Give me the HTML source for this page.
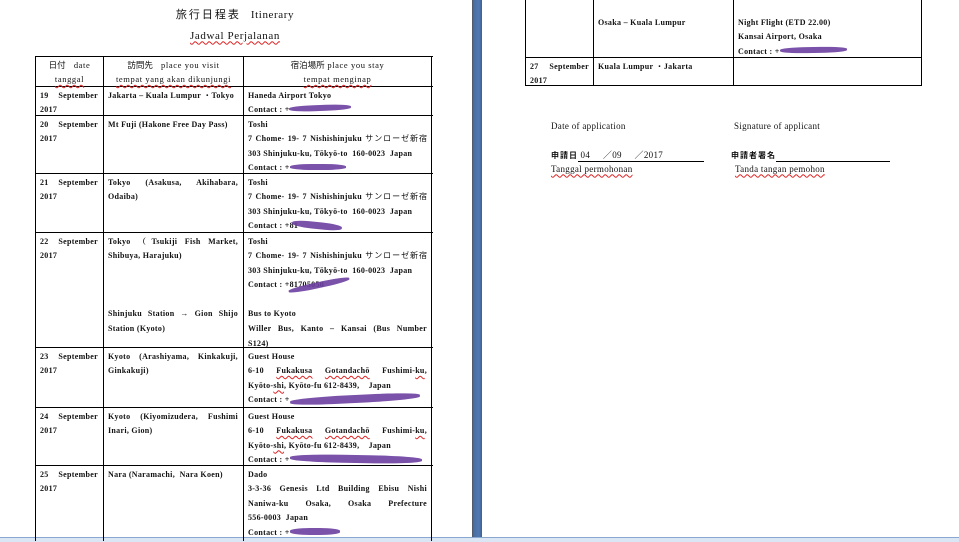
<!DOCTYPE html>
<html><head><meta charset="utf-8"><style>
body{margin:0;width:959px;height:541px;overflow:hidden;background:#fff;position:relative;font-family:"Liberation Serif","Noto Serif CJK SC",serif;color:#111}
.l{position:absolute;background:#000}
.t{position:absolute;font-size:8px;line-height:14.6px;font-weight:bold;letter-spacing:0.3px;white-space:nowrap;margin-top:1.5px}
.t>div{height:14.6px}
.J{text-align:justify;text-align-last:justify}
.c{text-align:center}
.s{position:absolute;background:#6b3fa0;border-radius:40%;opacity:.9;margin-top:1px}
.w{text-decoration:underline wavy #d22;text-decoration-thickness:1px;text-underline-offset:2px}
.j{font-family:"Noto Sans CJK JP",sans-serif;font-weight:normal;letter-spacing:0}
</style></head><body>
<div style="position:absolute;left:472px;top:0;width:10px;height:537px;background:linear-gradient(90deg,#555 0,#4a6ea5 2px,#5078b0 70%,#3d5f95)"></div>
<div style="position:absolute;left:0;top:537px;width:959px;height:4px;background:#dbe6f4;border-top:1px solid #8aa8cf"></div>

<div class="t c" style="left:160px;top:5px;width:150px;font-size:11px;font-weight:normal;letter-spacing:0.6px"><span class="j" style="letter-spacing:2px">旅行日程表</span>&nbsp;&nbsp; Itinerary</div>
<div class="t c" style="left:160px;top:27px;width:150px;font-size:11px;font-weight:normal;letter-spacing:0.6px"><span class="w">Jadwal Perjalanan</span></div>

<div class="l" style="left:35px;top:56px;width:398px;height:1px"></div>
<div class="l" style="left:35px;top:86px;width:398px;height:1px"></div>
<div class="l" style="left:35px;top:115px;width:398px;height:1px"></div>
<div class="l" style="left:35px;top:173px;width:398px;height:1px"></div>
<div class="l" style="left:35px;top:232px;width:398px;height:1px"></div>
<div class="l" style="left:35px;top:347px;width:398px;height:1px"></div>
<div class="l" style="left:35px;top:407px;width:398px;height:1px"></div>
<div class="l" style="left:35px;top:465px;width:398px;height:1px"></div>
<div class="l" style="left:35px;top:56px;width:1px;height:485px"></div>
<div class="l" style="left:103px;top:56px;width:1px;height:485px"></div>
<div class="l" style="left:243px;top:56px;width:1px;height:485px"></div>
<div class="l" style="left:431px;top:56px;width:1px;height:485px"></div>

<div class="t c" style="left:36px;top:56px;width:67px;font-weight:normal;font-size:8.5px;letter-spacing:0.6px"><div><span class="j">日付</span>&nbsp;&nbsp; date</div><div><span class="w">tanggal</span></div></div>
<div class="t c" style="left:104px;top:56px;width:139px;font-weight:normal;font-size:8.5px;letter-spacing:0.6px"><div><span class="j">訪問先</span>&nbsp;&nbsp; place you visit</div><div><span class="w">tempat yang akan dikunjungi</span></div></div>
<div class="t c" style="left:244px;top:56px;width:187px;font-weight:normal;font-size:8.5px;letter-spacing:0.6px"><div><span class="j">宿泊場所</span> place you stay</div><div><span class="w">tempat menginap</span></div></div>

<div class="t" style="left:40px;top:87px;width:58px"><div class="J">19 September</div><div>2017</div></div>
<div class="t" style="left:108px;top:87px;width:130px"><div>Jakarta – Kuala Lumpur ・Tokyo</div></div>
<div class="t" style="left:248px;top:87px;width:178px"><div>Haneda Airport Tokyo</div><div>Contact : +</div></div>
<div class="s" style="left:289px;top:104px;width:62px;height:6px;transform:rotate(-2deg)"></div>

<div class="t" style="left:40px;top:116px;width:58px"><div class="J">20 September</div><div>2017</div></div>
<div class="t" style="left:108px;top:116px;width:130px"><div>Mt Fuji (Hakone Free Day Pass)</div></div>
<div class="t" style="left:248px;top:116px;width:179px"><div>Toshi</div><div class="J">7 Chome- 19- 7 Nishishinjuku <span class="j">サンローゼ新宿</span></div><div>303 Shinjuku-ku, Tōkyō-to &nbsp;160-0023 &nbsp;Japan</div><div>Contact : +</div></div>
<div class="s" style="left:290px;top:163px;width:56px;height:6px"></div>

<div class="t" style="left:40px;top:174px;width:58px"><div class="J">21 September</div><div>2017</div></div>
<div class="t" style="left:108px;top:174px;width:130px"><div class="J">Tokyo (Asakusa, Akihabara,</div><div>Odaiba)</div></div>
<div class="t" style="left:248px;top:174px;width:179px"><div>Toshi</div><div class="J">7 Chome- 19- 7 Nishishinjuku <span class="j">サンローゼ新宿</span></div><div>303 Shinjuku-ku, Tōkyō-to &nbsp;160-0023 &nbsp;Japan</div><div>Contact : +81</div></div>
<div class="s" style="left:292px;top:221px;width:50px;height:7px;transform:rotate(6deg)"></div>

<div class="t" style="left:40px;top:233px;width:58px"><div class="J">22 September</div><div>2017</div></div>
<div class="t" style="left:108px;top:233px;width:130px"><div class="J">Tokyo （Tsukiji Fish Market,</div><div>Shibuya, Harajuku)</div><div></div><div></div><div></div><div class="J">Shinjuku Station → Gion Shijo</div><div>Station (Kyoto)</div></div>
<div class="t" style="left:248px;top:233px;width:179px"><div>Toshi</div><div class="J">7 Chome- 19- 7 Nishishinjuku <span class="j">サンローゼ新宿</span></div><div>303 Shinjuku-ku, Tōkyō-to &nbsp;160-0023 &nbsp;Japan</div><div>Contact : +81705050</div><div></div><div>Bus to Kyoto</div><div class="J">Willer Bus, Kanto – Kansai (Bus Number</div><div>S124)</div></div>
<div class="s" style="left:288px;top:281px;width:62px;height:6px;transform:rotate(-12deg)"></div>

<div class="t" style="left:40px;top:348px;width:58px"><div class="J">23 September</div><div>2017</div></div>
<div class="t" style="left:108px;top:348px;width:130px"><div class="J">Kyoto (Arashiyama, Kinkakuji,</div><div>Ginkakuji)</div></div>
<div class="t" style="left:248px;top:348px;width:179px"><div>Guest House</div><div class="J">6-10 <span class="w">Fukakusa</span> <span class="w">Gotandachō</span> Fushimi-<span class="w">ku</span>,</div><div>Kyōto-<span class="w">shi</span>, Kyōto-fu 612-8439, &nbsp;&nbsp;&nbsp;Japan</div><div>Contact : +</div></div>
<div class="s" style="left:290px;top:394px;width:130px;height:8px;transform:rotate(-3deg)"></div>

<div class="t" style="left:40px;top:408px;width:58px"><div class="J">24 September</div><div>2017</div></div>
<div class="t" style="left:108px;top:408px;width:130px"><div class="J">Kyoto (Kiyomizudera, Fushimi</div><div>Inari, Gion)</div></div>
<div class="t" style="left:248px;top:408px;width:179px"><div>Guest House</div><div class="J">6-10 <span class="w">Fukakusa</span> <span class="w">Gotandachō</span> Fushimi-<span class="w">ku</span>,</div><div>Kyōto-<span class="w">shi</span>, Kyōto-fu 612-8439, &nbsp;&nbsp;&nbsp;Japan</div><div>Contact : +</div></div>
<div class="s" style="left:290px;top:454px;width:132px;height:8px;transform:rotate(1deg)"></div>

<div class="t" style="left:40px;top:466px;width:58px"><div class="J">25 September</div><div>2017</div></div>
<div class="t" style="left:108px;top:466px;width:130px"><div>Nara (Naramachi, &nbsp;Nara Koen)</div></div>
<div class="t" style="left:248px;top:466px;width:179px"><div>Dado</div><div class="J">3-3-36 Genesis Ltd Building Ebisu Nishi</div><div class="J">Naniwa-ku Osaka, Osaka Prefecture</div><div>556-0003 &nbsp;Japan</div><div>Contact : +</div></div>
<div class="s" style="left:290px;top:527px;width:50px;height:7px"></div>

<div class="l" style="left:525px;top:0;width:1px;height:86px"></div>
<div class="l" style="left:593px;top:0;width:1px;height:86px"></div>
<div class="l" style="left:733px;top:0;width:1px;height:86px"></div>
<div class="l" style="left:921px;top:0;width:1px;height:86px"></div>
<div class="l" style="left:525px;top:57px;width:397px;height:1px"></div>
<div class="l" style="left:525px;top:85px;width:397px;height:1px"></div>
<div class="t" style="left:598px;top:14px;width:130px"><div>Osaka – Kuala Lumpur</div></div>
<div class="t" style="left:738px;top:14px;width:180px"><div>Night Flight (ETD 22.00)</div><div>Kansai Airport, Osaka</div><div>Contact : +</div></div>
<div class="s" style="left:780px;top:46px;width:67px;height:6px;transform:rotate(-1deg)"></div>
<div class="t" style="left:530px;top:58px;width:59px"><div class="J">27 September</div><div>2017</div></div>
<div class="t" style="left:598px;top:58px;width:130px"><div>Kuala Lumpur ・Jakarta</div></div>

<div class="t" style="left:551px;top:117px;font-size:9px;font-weight:normal">Date of application</div>
<div class="t" style="left:734px;top:117px;font-size:9px;font-weight:normal">Signature of applicant</div>
<div class="t" style="left:551px;top:146px;font-size:9px;font-weight:normal"><span class="j" style="font-size:8px;font-weight:bold;letter-spacing:1px">申請日</span><span style="display:inline-block;width:126px;border-bottom:1px solid #000;line-height:11px">&nbsp;04 &nbsp;&nbsp;&nbsp;&nbsp;／09 &nbsp;&nbsp;&nbsp;&nbsp;／2017</span></div>
<div class="t" style="left:731px;top:146px;font-size:9px;font-weight:normal"><span class="j" style="font-size:8px;font-weight:bold;letter-spacing:1px">申請者署名</span><span style="display:inline-block;width:114px;border-bottom:1px solid #000;line-height:11px">&nbsp;</span></div>
<div class="t" style="left:551px;top:160px;font-size:9px;font-weight:normal"><span class="w">Tanggal permohonan</span></div>
<div class="t" style="left:735px;top:160px;font-size:9px;font-weight:normal"><span class="w">Tanda tangan pemohon</span></div>
</body></html>
